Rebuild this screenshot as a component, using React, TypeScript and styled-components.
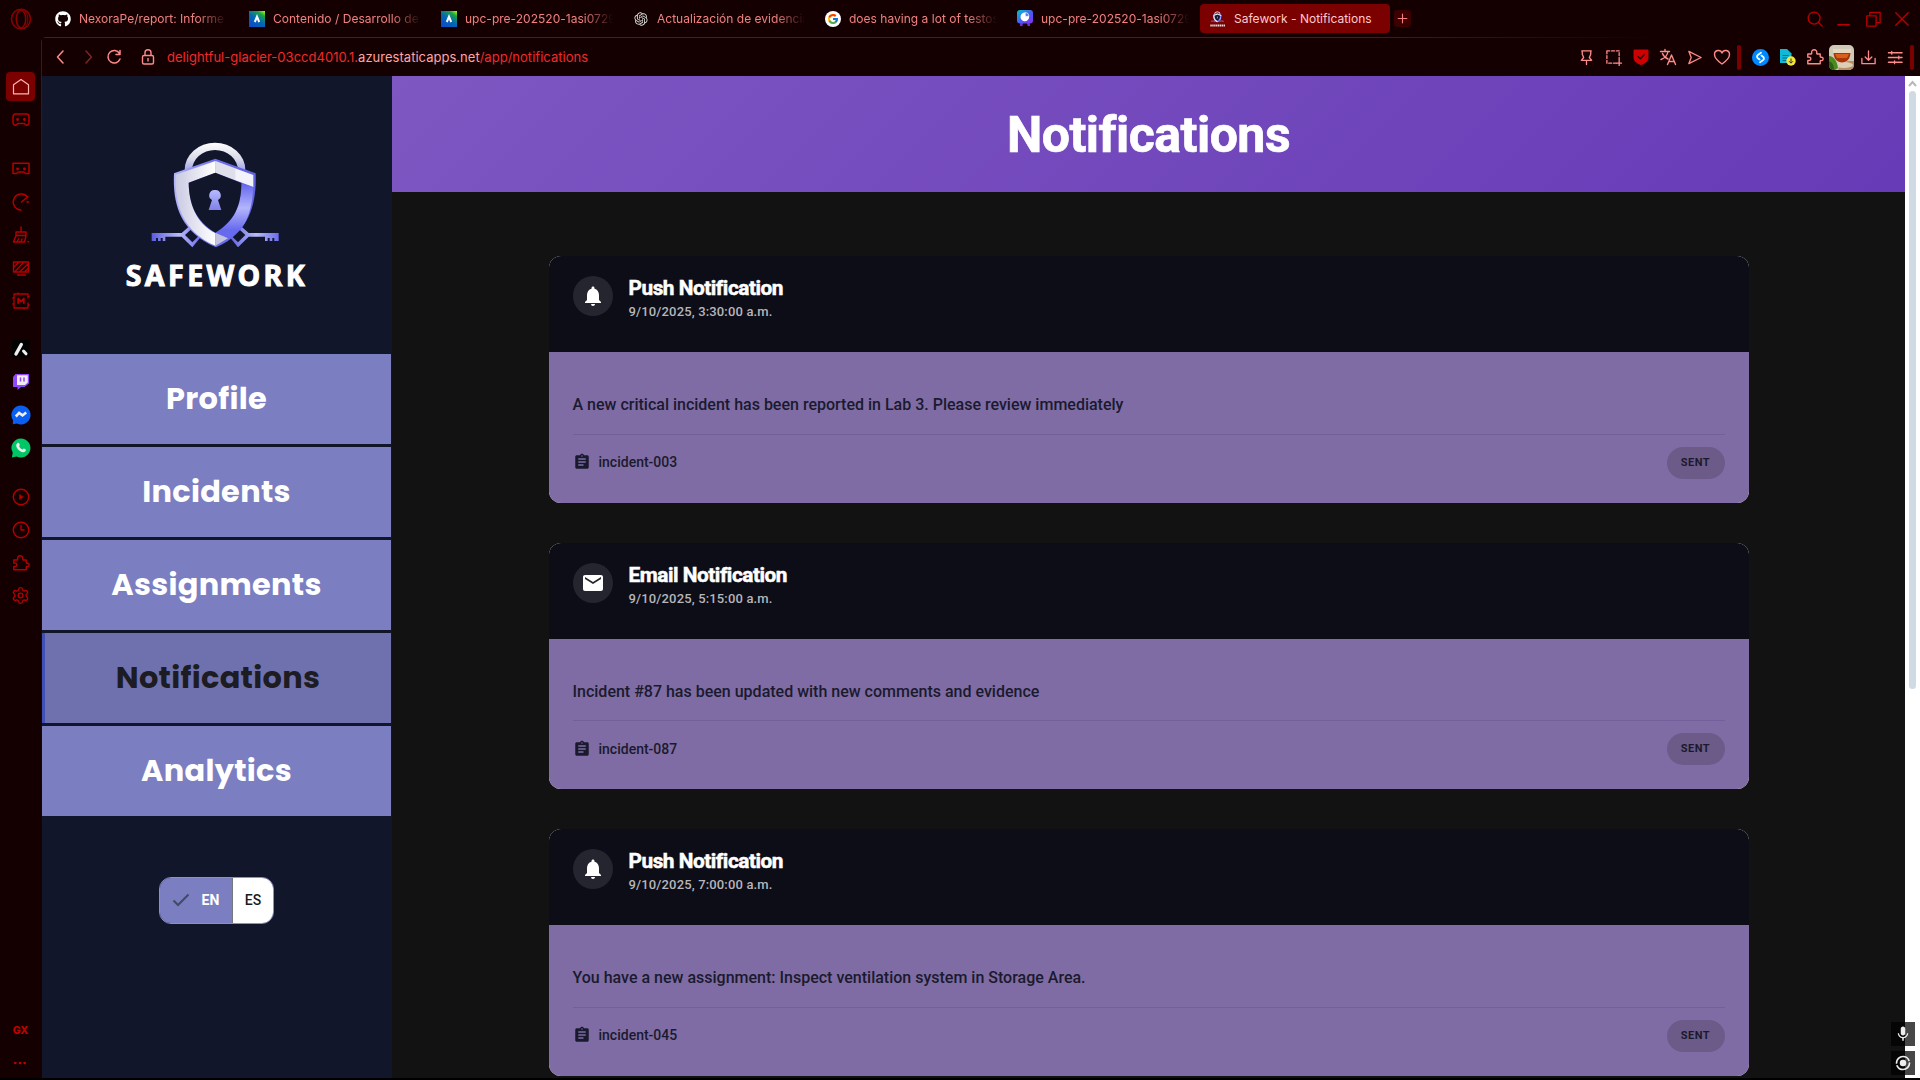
import React from "react";
import styled, { createGlobalStyle, css } from "styled-components";
import { MdNotifications, MdEmail, MdAssignment, MdMic } from "react-icons/md";
import { FaGithub } from "react-icons/fa";
import { FcGoogle } from "react-icons/fc";
import { RiOpenaiFill } from "react-icons/ri";
import { Settings } from "lucide-react";

const Global = createGlobalStyle`
  *, *::before, *::after { box-sizing: border-box; }
  html, body { margin: 0; padding: 0; background: #000; overflow: hidden; }
`;

const ui = `Inter, "Noto Sans", sans-serif`;
const body = `Roboto, "Liberation Sans", sans-serif`;

const Window = styled.div`
  display: flex;
  width: 1920px;
  height: 1080px;
  padding-bottom: 2px;
  background: #000;
  overflow: hidden;
`;

/* ---------- Browser rail ---------- */
const Rail = styled.aside`
  display: flex;
  flex-direction: column;
  align-items: center;
  width: 41px;
  flex: none;
  background: #140000;
`;
const RailLogo = styled.div`
  display: grid;
  place-items: center;
  height: 37px;
  margin-bottom: 33px;
  color: #8c0000;
`;
const RailItem = styled.div<{ $active?: boolean; $gap?: number }>`
  display: grid;
  place-items: center;
  width: 29px;
  height: 29px;
  margin: 2px 0;
  margin-top: ${(p) => (p.$gap ?? 0) + 2}px;
  border-radius: 4px;
  color: ${(p) => (p.$active ? "#ffb3b3" : "#b40000")};
  background: ${(p) => (p.$active ? "#7b0000" : "transparent")};
`;
const RailFoot = styled.div`
  display: flex;
  flex-direction: column;
  align-items: center;
  gap: 18px;
  margin-top: auto;
  padding-bottom: 8px;
  color: #c00000;
  font: 800 10.5px/14px ${ui};
`;

/* ---------- Browser chrome ---------- */
const Main = styled.div`
  display: flex;
  flex-direction: column;
  flex: 1;
  min-width: 0;
  background: #140000;
`;
const TabBar = styled.header`
  display: flex;
  align-items: center;
  height: 37px;
  flex: none;
  padding-left: 4px;
  font: 400 12px/18px ${ui};
  letter-spacing: 0.02px;
`;
const Tab = styled.div<{ $active?: boolean }>`
  display: flex;
  align-items: center;
  gap: 8px;
  width: 190px;
  height: 29px;
  margin-right: 2px;
  padding-left: 9px;
  border-radius: 4px;
  color: #f28080;
  &:first-child { margin-right: 4px; }
  ${(p) => p.$active && css`background: #7b0000; color: #ffcaca; margin-left: 1px;`}
`;
const TabIcon = styled.span`
  display: grid;
  place-items: center;
  width: 17px;
  height: 17px;
  flex: none;
`;
const TabLabel = styled.span<{ $fade?: boolean }>`
  width: 156px;
  white-space: nowrap;
  ${(p) => p.$fade && css`mask-image: linear-gradient(90deg, #000 76%, transparent 95%);`}
`;
const NewTab = styled.div`
  display: grid;
  place-items: center;
  width: 17px;
  height: 17px;
  margin-left: 2px;
  border-radius: 3px;
  background: #3c0000;
  color: #f28080;
`;
const WindowControls = styled.div`
  display: flex;
  align-items: center;
  gap: 13px;
  margin-left: auto;
  padding-right: 10px;
  color: #b80000;
`;
const Frame = styled.div`
  display: flex;
  flex-direction: column;
  flex: 1;
  min-height: 0;
  padding-left: 1px;
  border-top-left-radius: 5px;
  background:
    linear-gradient(90deg, #8b0000 70%, #140000 86%) top / 100% 1px no-repeat,
    linear-gradient(180deg, #7c0000 0, #3a0000 400px, #140000 900px) left / 1px 100% no-repeat,
    #140000;
`;
const AddressBar = styled.div`
  display: flex;
  align-items: center;
  height: 38px;
  flex: none;
  padding: 0 6px 0 10px;
  margin-top: 1px;
  color: #ff8a8a;
`;
const NavIcons = styled.div`
  display: flex;
  gap: 8.5px;
  width: 115px;
`;
const Url = styled.div`
  color: #f02a2a;
  font: 400 13px/20px ${ui};
  letter-spacing: 0.02px;
  b { font-weight: 400; color: #ffa5a5; }
`;
const Tools = styled.div`
  display: flex;
  align-items: center;
  margin-left: auto;
`;
const Tool = styled.span`
  display: grid;
  place-items: center;
  width: 27px;
`;
const Bar = styled.span<{ $before?: number; $after?: number }>`
  width: 4px;
  height: 25px;
  margin: 0 ${(p) => p.$after ?? 0}px 0 ${(p) => p.$before ?? 1}px;
  border-radius: 2px;
  background: #7b0000;
`;

/* ---------- Application ---------- */
const AppShell = styled.div`
  display: flex;
  flex: 1;
  min-height: 0;
  background: #121212;
  overflow: hidden;
`;
const Side = styled.nav`
  display: flex;
  flex-direction: column;
  align-items: center;
  width: 350px;
  flex: none;
  background: #11162b;
`;
const LogoBox = styled.div`
  height: 278px;
  width: 100%;
  padding: 44px 0 0 58px;
`;
const Menu = styled.div`
  display: flex;
  flex-direction: column;
  gap: 3px;
  width: 349px;
  align-self: flex-start;
`;
const MenuItem = styled.a<{ $active?: boolean }>`
  display: flex;
  align-items: center;
  justify-content: center;
  height: 90px;
  border-left: ${(p) => (p.$active ? "3px solid #3f51b5" : "0")};
  background: ${(p) => (p.$active ? "#6f71ae" : "#7b7ec0")};
  color: ${(p) => (p.$active ? "#1c1c22" : "#fff")};
  font: 700 30.4px/40px Poppins, Inter, sans-serif;
  letter-spacing: 0.3px;
`;
const Languages = styled.div`
  display: flex;
  width: 115px;
  height: 47px;
  margin-top: 61px;
  margin-left: -1px;
  border: 1px solid #8b8ed0;
  border-radius: 12px;
  overflow: hidden;
  font: 500 14px/20px ${body};
`;
const Language = styled.button<{ $on?: boolean }>`
  display: flex;
  align-items: center;
  justify-content: center;
  gap: 12px;
  width: ${(p) => (p.$on ? 73 : 41)}px;
  flex: none;
  padding: 0 1px 1px 0;
  border: 0;
  border-right: ${(p) => (p.$on ? "1px solid #74777f" : "0")};
  background: ${(p) => (p.$on ? "#7b7ec0" : "#fff")};
  color: ${(p) => (p.$on ? "#fff" : "#1a1b1f")};
  font: inherit;
  font-weight: ${(p) => (p.$on ? 700 : 500)};
`;
const Page = styled.main`
  flex: 1;
  display: flex;
  flex-direction: column;
  min-width: 0;
`;
const Banner = styled.header`
  display: grid;
  place-items: center;
  height: 116px;
  flex: none;
  padding-top: 2px;
  background: linear-gradient(135deg, #7e57c2, #673ab7);
`;
const BannerTitle = styled.h1`
  margin: 0;
  color: #fff;
  font: 700 50px/56px ${body};
  letter-spacing: -0.5px;
  -webkit-text-stroke: 0.7px #fff;
`;
const List = styled.div`
  display: flex;
  flex-direction: column;
  gap: 40px;
  width: 1200px;
  margin: 64px auto 0;
`;
const Card = styled.article`
  height: 246.6px;
  flex: none;
  border-radius: 12px;
  background: #fff;
  overflow: hidden;
`;
const CardHead = styled.div`
  display: flex;
  gap: 16px;
  height: 96px;
  padding: 20px 24px;
  background: #0d0d18;
`;
const Avatar = styled.div`
  display: grid;
  place-items: center;
  width: 40px;
  height: 40px;
  border-radius: 50%;
  background: #25252f;
  color: #fff;
`;
const CardTitle = styled.h2`
  margin: 0;
  color: #fff;
  font: 700 20.8px/25px ${body};
  letter-spacing: -0.46px;
  -webkit-text-stroke: 0.5px #fff;
`;
const CardDate = styled.div`
  color: #b6b6ba;
  font: 500 13px/21px ${body};
  letter-spacing: 0.15px;
`;
const CardBody = styled.div`
  height: 151px;
  padding: 41px 24px 0;
  background: #7f6ca4;
  color: #1a1a2e;
`;
const Message = styled.p`
  margin: 0;
  height: 41.6px;
  border-bottom: 1px solid #735f99;
  font: 500 16px/24px ${body};
`;
const CardFoot = styled.div`
  display: flex;
  align-items: center;
  justify-content: space-between;
  height: 32px;
  margin-top: 12px;
`;
const Reference = styled.span`
  display: flex;
  align-items: center;
  gap: 8px;
  padding-bottom: 1px;
  font: 500 14px/20px ${body};
`;
const Status = styled.span`
  display: grid;
  place-items: center;
  width: 58px;
  height: 32px;
  border-radius: 16px;
  background: #6c5b89;
  font: 700 11px/16px ${body};
  letter-spacing: 0.5px;
`;
const Scroll = styled.div`
  display: flex;
  flex-direction: column;
  align-items: center;
  width: 15px;
  flex: none;
  padding-top: 3px;
  background: #fff;
  position: relative;
`;
const Thumb = styled.div`
  width: 7px;
  height: 598px;
  margin-top: 2px;
  border-radius: 4px;
  background: #d0dae4;
`;
const Overlay = styled.div`
  position: absolute;
  right: 5px;
  bottom: 3px;
  display: grid;
  gap: 5px;
`;
const OverlayButton = styled.div`
  display: grid;
  place-items: center;
  width: 24px;
  height: 24px;
  background: rgba(0, 0, 0, 0.72);
  color: #eee;
`;
const LogoArt = styled.svg`
  display: block;
`;

type IcoProps = { s?: number; w?: number; children: React.ReactNode; fill?: string };
const Ico = ({ s = 18, w = 1.2, children, fill = "none" }: IcoProps) => (
  <svg width={s} height={s} viewBox="0 0 18 18" fill={fill} stroke={fill === "none" ? "currentColor" : "none"} strokeWidth={w} strokeLinejoin="round" strokeLinecap="round">
    {children}
  </svg>
);

const puzzle = <path d="M1.8 6h3.4c.7 0 .5-.5.4-1.2C5.4 3 6.5 1.8 8.2 1.8S11 3 10.8 4.8c-.1.7-.2 1.200.5 1.200h2.900v2.600c0 .7.4.7 1 .6 1.100-.1 1.900.6 1.900 1.700s-.8 1.800-1.900 1.700c-.6-.1-1-.1-1 .6v2.500H1.800v-3.200c2.400.2 3-.5 3-1.700s-.8-1.900-3-1.700z" />;

const Atlas = () => (
  <svg width="16" height="16" viewBox="0 0 16 16">
    <defs>
      <linearGradient id="atlas" x1="1" y1="0" x2=".3" y2="1">
        <stop offset="0" stopColor="#b6ff00" />
        <stop offset=".25" stopColor="#19a24a" />
        <stop offset=".6" stopColor="#0566b8" />
        <stop offset="1" stopColor="#0a4fc4" />
      </linearGradient>
    </defs>
    <path fill="url(#atlas)" d="M0 0h16v16H0z" />
    <path d="M5.800 11 8 5.600 10.200 11" fill="none" stroke="#fff" strokeWidth="2" />
  </svg>
);

const Badge = () => (
  <svg width="16" height="17" viewBox="0 0 16 17">
    <defs>
      <linearGradient id="badge" x1="0" y1="0" x2="1" y2="1">
        <stop offset="0" stopColor="#00c4cc" />
        <stop offset=".55" stopColor="#4b5af0" />
        <stop offset="1" stopColor="#8b2cf0" />
      </linearGradient>
    </defs>
    <path d="M5 12 4 16M11 12l1 4" stroke="#7d2ae8" strokeWidth="2.5" />
    <rect width="16" height="13.5" rx="3" fill="url(#badge)" />
    <circle cx="7.8" cy="6.9" r="4.3" fill="#fff" />
    <path d="M8.300 6.300V2.500a4 4 0 0 1 3.800 3.800z" fill="#4b7af0" stroke="#fff" strokeWidth=".6" />
  </svg>
);

const Shield = () => (
  <>
    <defs>
      <linearGradient id="shackle" x1="0" y1="0" x2="0" y2="1">
        <stop offset="0" stopColor="#fff" />
        <stop offset=".55" stopColor="#d8d8e8" />
        <stop offset="1" stopColor="#8f92f0" />
      </linearGradient>
      <linearGradient id="left" x1="0" y1="0" x2="1" y2="0">
        <stop offset="0" stopColor="#c9c9e2" />
        <stop offset="1" stopColor="#fff" />
      </linearGradient>
      <linearGradient id="right" x1="0" y1="0" x2="0" y2="1">
        <stop offset="0" stopColor="#6264ee" />
        <stop offset=".45" stopColor="#b3b5fb" />
        <stop offset=".85" stopColor="#6769ee" />
      </linearGradient>
      <linearGradient id="edge" x1="0" y1="0" x2="1" y2="0">
        <stop offset="0" stopColor="#b4b5fa" />
        <stop offset=".5" stopColor="#6c6ef0" />
        <stop offset="1" stopColor="#5f61dd" />
      </linearGradient>
      <linearGradient id="keyL" x1="0" y1="0" x2="1" y2="0">
        <stop offset="0" stopColor="#5a5ce0" />
        <stop offset=".55" stopColor="#b9bbf8" />
        <stop offset="1" stopColor="#6a6cf0" />
      </linearGradient>
      <linearGradient id="hole" x1="0" y1="0" x2="0" y2="1">
        <stop offset="0" stopColor="#b8baff" />
        <stop offset="1" stopColor="#7f81e8" />
      </linearGradient>
    </defs>
    <path d="M254 160v-10a91 82 0 0 1 182 0v10h-22v-8a69 62 0 0 0-138 0v8z" fill="url(#shackle)" />
    <path fill="url(#keyL)" fillRule="evenodd" d="M155 339h90l27-24 32 34-27 33-32-32h-49v13h-8v-9h-6v9h-8v-9h-6v9h-13zM277 325l-22 20 22 22 20-20z" />
    <path fill="url(#keyL)" fillRule="evenodd" d="M536 339h-90l-27-24-32 34 27 33 32-32h49v13h8v-9h6v9h8v-9h6v9h13zM414 325l22 20-22 22-20-20z" />
    <path d="M346 116 467 160c3 82-14 176-119 222C236 334 218 246 222 160z" fill="url(#edge)" />
    <path d="M346 123v35l-80 30c2 66 22 122 80 151v38C246 334 224 250 227 164z" fill="url(#left)" />
    <path d="M346 123 460 165v36l-114-43z" fill="#f2f2fa" />
    <path d="M346 123v35l60 22v-35z" fill="#c8c8dc" opacity=".45" />
    <path d="M424 190l36 12c-4 80-28 134-76 153l-36-16c54-34 76-80 76-149z" fill="url(#right)" />
    <path d="M346 338l38 17-38 22z" fill="#c3c3de" />
    <path d="M346 158l78 31c0 69-22 115-78 149-58-34-79-84-80-150z" fill="#11162b" />
    <path d="M345 210a16 16 0 0 1 9 30l10 30h-38l10-30a16 16 0 0 1 9-30z" fill="url(#hole)" />
  </>
);

const Logo = () => (
  <LogoArt width="240" height="190" viewBox="0 0 720 570">
    <Shield />
    <text x="77" y="497" textLength="537" lengthAdjust="spacing" fill="#fff" stroke="#fff" strokeWidth="3" fontFamily="Noto Sans, sans-serif" fontWeight="700" fontSize="86">
      SAFEWORK
    </text>
  </LogoArt>
);

const tabs = [
  { icon: <FaGithub size={16} color="#fff" />, label: "NexoraPe/report: Informe" },
  { icon: <Atlas />, label: "Contenido / Desarrollo de" },
  { icon: <Atlas />, label: "upc-pre-202520-1asi0729" },
  { icon: <RiOpenaiFill size={16} color="#ddd" />, label: "Actualización de evidencia" },
  {
    icon: (
      <svg width="16" height="16" viewBox="0 0 16 16"><circle cx="8" cy="8" r="8" fill="#fff" /><FcGoogle x="2" y="2" size={12} /></svg>
    ),
    label: "does having a lot of testos",
  },
  { icon: <Badge />, label: "upc-pre-202520-1asi0729" },
];

const menu = [
  { label: "Profile" },
  { label: "Incidents" },
  { label: "Assignments" },
  { label: "Notifications", active: true },
  { label: "Analytics" },
];

const notifications = [
  { kind: "Push", date: "9/10/2025, 3:30:00 a.m.", text: "A new critical incident has been reported in Lab 3. Please review immediately", ref: "incident-003" },
  { kind: "Email", date: "9/10/2025, 5:15:00 a.m.", text: "Incident #87 has been updated with new comments and evidence", ref: "incident-087" },
  { kind: "Push", date: "9/10/2025, 7:00:00 a.m.", text: "You have a new assignment: Inspect ventilation system in Storage Area.", ref: "incident-045" },
];

const railItems: { gap?: number; active?: boolean; icon: React.ReactNode }[] = [
  { active: true, icon: <Ico><path d="M1.500 6.800 9 1.500l7.500 5.300v9h-15z" /></Ico> },
  { icon: <Ico w={1.5}><path d="M3.500 3h11c1.700 0 2.500 1.400 2.500 3.200v5.300c0 2-1.400 3-3 2.500l-2-1.600H6L4 14c-1.600.5-3-.5-3-2.500V6.200C1 4.400 1.800 3 3.500 3z" /><path d="M5.500 8.500h.1M12.400 8.500h.1" strokeWidth="2.8" /></Ico> },
  { gap: 16, icon: <Ico w={1.5}><path d="M1 3.300h16v10.200h-3.500l-1.800-1.500H6.300L4.500 13.500H1z" /><path d="M5.500 9h.1M12.400 9h.1" strokeWidth="2.8" /></Ico> },
  { icon: <Ico w={1.4}><path d="M9 17A8 8 0 1 1 15.500 4M16.500 9H15M9.500 9 16 3.600" /></Ico> },
  { icon: <Ico w={1.4}><path d="M9 1v5M4 6h10v3.500H4zM4 9.500 1.500 16h11L14 9.500M5 16l1.500-3M9 16l1-3M16 15.800h.5" /></Ico> },
  { icon: <Ico w={1.4}><path d="M1.500 3h15v10h-15zM5.500 16h8M2 8l5-5M3 12.500 12 3M8 12.500 16 5M13 12.500l3.500-3.500" /></Ico> },
  { icon: <Ico w={1.3}><path d="M2 2h14v4M16 11v5H2V2M.8 6H2M.8 12H2M6 2V.8M12 17.200V16M16 4.500h1.200M16 13h1.200" /><path d="M6.200 11.800V6.500L9 9.600l2.800-3.100v5.300" strokeWidth="1.800" strokeLinecap="butt" /></Ico> },
  { gap: 15, icon: <svg width="18" height="18" viewBox="0 0 18 18"><path fill="#000" d="M0 0h18v18H0z" /><path d="M9.300 4.500 4 14" stroke="#eee" strokeWidth="3.400" strokeLinecap="round" /><path d="m11.500 11 2.500 2.800" stroke="#eee" strokeWidth="3" strokeLinecap="round" /></svg> },
  { icon: <svg width="18" height="18" viewBox="0 0 18 18"><path fill="#9146ff" d="M3.500 1H17v9.500L12.500 14H9l-3.500 3v-3H1V4z" /><path fill="#eee" d="M5 2.300h10.800V9.500L13 12H5z" /><path d="M8.500 4.500v4M12 4.500v4" stroke="#9146ff" strokeWidth="1.500" /></svg> },
  { icon: <svg width="20" height="20" viewBox="0 0 20 20"><path fill="#0a5ff0" d="M10 .5A9.500 9.500 0 1 1 6 18.600L1.800 19.200l.2-4A9.500 9.500 0 0 1 10 .5z" /><path d="m4.800 11.500 3.300-3.600 3.400 2.500 3.700-3" fill="none" stroke="#eee" strokeWidth="2.600" /></svg> },
  { icon: <svg width="20" height="20" viewBox="0 0 20 20"><path fill="#00c765" d="M10 .5A9.500 9.500 0 1 1 5.500 18.400L.8 19.400l1-4.600A9.500 9.500 0 0 1 10 .5z" /><path fill="#eee" d="M6.500 5c1-.7 1.600 0 2.200 1.500.3.900-.6 1.300-.5 1.900.6 1.300 1.800 2.400 3.100 3 .7 0 .9-1 1.700-.8 1.700.7 2.200 1.200 1.700 2.200-.7 1.500-2.300 1.800-4 1.100-2.600-1-4.500-3-5.300-5.200-.4-1.400 0-3 1.100-3.700z" /></svg> },
  { gap: 16, icon: <Ico w={1.4}><circle cx="9" cy="9" r="7.7" /><path d="M7.500 6.500v5L11.500 9z" fill="currentColor" strokeWidth=".4" /></Ico> },
  { icon: <Ico w={1.4}><circle cx="9" cy="9" r="7.7" /><path d="M9 4.500V9h3" /></Ico> },
  { icon: <Ico w={1.4}>{puzzle}</Ico> },
  { icon: <Settings size={19} strokeWidth={1.7} /> },
];

export default function App() {
  return (
    <>
      <Global />
      <Window>
        <Rail>
          <RailLogo>
            <svg width="22" height="22" viewBox="0 0 22 22" fill="none" stroke="currentColor" strokeWidth="1.5">
              <ellipse cx="11" cy="11" rx="9.500" ry="9.800" />
              <ellipse cx="11" cy="11" rx="4.700" ry="8.800" />
              <path d="M13 1.500c6.500 2 6.500 17 0 19" strokeWidth="1" />
            </svg>
          </RailLogo>
          {railItems.map((r, i) => (
            <RailItem key={i} $active={r.active} $gap={r.gap}>{r.icon}</RailItem>
          ))}
          <RailFoot>
            <span>GX</span>
            <Ico s={14} fill="currentColor"><circle cx="3" cy="9" r="1.7" /><circle cx="9" cy="9" r="1.7" /><circle cx="15" cy="9" r="1.7" /></Ico>
          </RailFoot>
        </Rail>
        <Main>
          <TabBar>
            {tabs.map((t, i) => (
              <Tab key={i}>
                <TabIcon>{t.icon}</TabIcon>
                <TabLabel $fade>{t.label}</TabLabel>
              </Tab>
            ))}
            <Tab $active>
              <TabIcon>
                <svg width="15" height="16" viewBox="130 50 440 470"><Shield /><path d="M140 475h430" stroke="#ddd" strokeWidth="60" strokeDasharray="42 14" /></svg>
              </TabIcon>
              <TabLabel>Safework - Notifications</TabLabel>
            </Tab>
            <NewTab><Ico s={13}><path d="M9 3v12M3 9h12" strokeWidth="1.600" /></Ico></NewTab>
            <WindowControls>
              <Ico s={16} w={1.5}><circle cx="8" cy="8" r="6.7" /><path d="m13 13 4 4" /></Ico>
              <Ico s={16}><path d="M2 15.500h13" strokeWidth="1.500" /></Ico>
              <Ico s={16} w={1.5}><path d="M2 5.500h10.500V17H2zM5.500 5V1.500H17v11.500h-4" /></Ico>
              <Ico s={16} w={1.5}><path d="m2 2 14 14M16 2 2 16" /></Ico>
            </WindowControls>
          </TabBar>
          <Frame>
            <AddressBar>
              <NavIcons>
                <Ico><path d="M11 3 5.500 9l5.500 6" strokeWidth="1.500" /></Ico>
                <Ico><path d="m7 3 5.500 6L7 15" stroke="#7a2626" strokeWidth="1.500" /></Ico>
                <Ico><path d="M14.500 5.500A6.200 6.200 0 1 0 15 11M15 2.500v4h-4" strokeWidth="1.500" /></Ico>
                <svg width="28" height="18" viewBox="-7 0 28 18" fill="none" stroke="currentColor" strokeWidth="1.4"><rect x="3.500" y="7.500" width="11" height="8.500" rx="1.500" /><path d="M6 7.500V4.800a3 3 0 0 1 6 0v2.700M9 10v3.500" /></svg>
              </NavIcons>
              <Url>delightful-glacier-03ccd4010.1.<b>azurestaticapps.net</b>/app/notifications</Url>
              <Tools>
                <Tool><Ico s={17} w={1.4}><path d="M4 2h10M4.500 2v3.500L6 9l-2.500 3h11L12 9l1.500-3.500V2M9 12v4.500" /></Ico></Tool>
                <Tool><Ico s={17} w={1.4}><path d="M2 2h13v10M2 2v13h10" strokeDasharray="3 2" /><path d="M12.500 15h5M15 12.500v5" /></Ico></Tool>
                <Tool><Ico s={18} fill="#cf0000"><path d="M2.500 1.500h13a1 1 0 0 1 1 1V9c0 4-3 6.500-7.500 8C4.500 15.500 1.500 13 1.500 9V2.500a1 1 0 0 1 1-1z" /><path d="m6 8.500 2.300 2.300L12 6.800" fill="none" stroke="#200" strokeWidth="1.500" /></Ico></Tool>
                <Tool><Ico s={18} w={1.4}><path d="M1.500 3.500h9M6 1.500v2M9 3.500C8.500 7 6 10 2 11.500M3.500 5.500C4.500 8 6.500 10 9 11M8.500 16.500 12.500 7l4 9.500M9.800 13.500h5.400" /></Ico></Tool>
                <Tool><Ico s={17} w={1.4}><path d="M3 2.500 16 9 3 15.500 5.500 9z" /></Ico></Tool>
                <Tool><Ico s={18} w={1.4}><path d="M9 16C4 12.500 1.500 10 1.500 6.500c0-4.500 6-5.500 7.500-1.500 1.500-4 7.500-3 7.500 1.500C16.500 10 14 12.500 9 16z" /></Ico></Tool>
                <Bar $before={2} $after={6} />
                <Tool>
                  <svg width="17" height="17" viewBox="0 0 18 18"><circle cx="9" cy="9" r="9" fill="#0088ff" /><path d="M9.500 4 6.500 6c-1.700 1.200-1.500 3.200.3 4.200l1.200.8M8.500 14l3-2c1.700-1.200 1.500-3.200-.3-4.200L10 7" fill="none" stroke="#fff" strokeWidth="1.900" strokeLinecap="round" /></svg>
                </Tool>
                <Tool>
                  <svg width="16" height="17" viewBox="0 0 16 17"><path d="M0 0h7l4.500 4.500V14H0z" fill="#0fb9d8" /><path d="M2.500 6.500h6M2.500 9h5M2.500 11.500h4" stroke="#056f88" strokeWidth="1" /><circle cx="11" cy="12" r="4.7" fill="#f4e63a" /><path d="M11 9.500v4.500M9 12.200l2 2 2-2" fill="none" stroke="#333" /></svg>
                </Tool>
                <Tool><Ico s={18} w={1.4}>{puzzle}</Ico></Tool>
                <Tool>
                  <svg width="25" height="25" viewBox="0 0 25 25">
                    <clipPath id="tea"><rect width="25" height="25" rx="5" /></clipPath>
                    <g clipPath="url(#tea)">
                      <path fill="#cfc9b8" d="M0 0h25v25H0z" />
                      <path fill="#b98e62" d="M12 16h13v9H9z" />
                      <ellipse cx="15" cy="20" rx="9" ry="3" fill="#dccdb5" />
                      <path d="M4 4h18c.5 8-3 14-9 14S3.500 12 4 4z" fill="#e9d6c0" />
                      <path d="M4.500 8h17c-.5 6-3.500 9.500-8.500 9.500S5 14 4.500 8z" fill="#a83408" />
                      <path d="M6 9h14l-2 4H8z" fill="#d9601a" />
                      <path d="M0 11c4 0 8 4 9 12l-3 2H0z" fill="#4b8a22" />
                      <path d="M0 16c3 1 5 4 5 9H0z" fill="#2c5f14" />
                    </g>
                  </svg>
                </Tool>
                <Tool><Ico s={17} w={1.4}><path d="M2 10v5.500h14V10M9 2v10M5.500 8.500 9 12l3.500-3.500" /></Ico></Tool>
                <Tool><Ico s={17} w={1.4}><path d="M1.500 4H16M1.500 9H16M1.500 14H16M5 2.500v3M12.500 7.500v3M8 12.500v3" /></Ico></Tool>
                <Bar />
              </Tools>
            </AddressBar>
            <AppShell>
              <Side>
                <LogoBox><Logo /></LogoBox>
                <Menu>
                  {menu.map((m) => (
                    <MenuItem key={m.label} $active={m.active}>{m.label}</MenuItem>
                  ))}
                </Menu>
                <Languages>
                  <Language $on>
                    <svg width="18" height="14" viewBox="0 0 18 14" fill="none" stroke="#444a63" strokeWidth="2"><path d="M1.500 7.500 6 12 16.500 1.500" /></svg>
                    EN
                  </Language>
                  <Language>ES</Language>
                </Languages>
              </Side>
              <Page>
                <Banner><BannerTitle>Notifications</BannerTitle></Banner>
                <List>
                  {notifications.map((n) => (
                    <Card key={n.ref}>
                      <CardHead>
                        <Avatar>{n.kind === "Push" ? <MdNotifications size={24} /> : <MdEmail size={24} />}</Avatar>
                        <div>
                          <CardTitle>{n.kind} Notification</CardTitle>
                          <CardDate>{n.date}</CardDate>
                        </div>
                      </CardHead>
                      <CardBody>
                        <Message>{n.text}</Message>
                        <CardFoot>
                          <Reference><MdAssignment size={18} />{n.ref}</Reference>
                          <Status>SENT</Status>
                        </CardFoot>
                      </CardBody>
                    </Card>
                  ))}
                </List>
              </Page>
              <Scroll>
                <svg width="9" height="10" viewBox="0 0 9 10" fill="none" stroke="#b8b8b8" strokeWidth="2"><path d="m1 7 3.500-4L8 7" /></svg>
                <Thumb />
                <Overlay>
                  <OverlayButton><MdMic size={18} /></OverlayButton>
                  <OverlayButton><Ico s={18} w={1.7}><circle cx="9" cy="9" r="6.5" strokeDasharray="17 3" /><circle cx="9" cy="9" r="2.4" fill="currentColor" /></Ico></OverlayButton>
                </Overlay>
              </Scroll>
            </AppShell>
          </Frame>
        </Main>
      </Window>
    </>
  );
}
